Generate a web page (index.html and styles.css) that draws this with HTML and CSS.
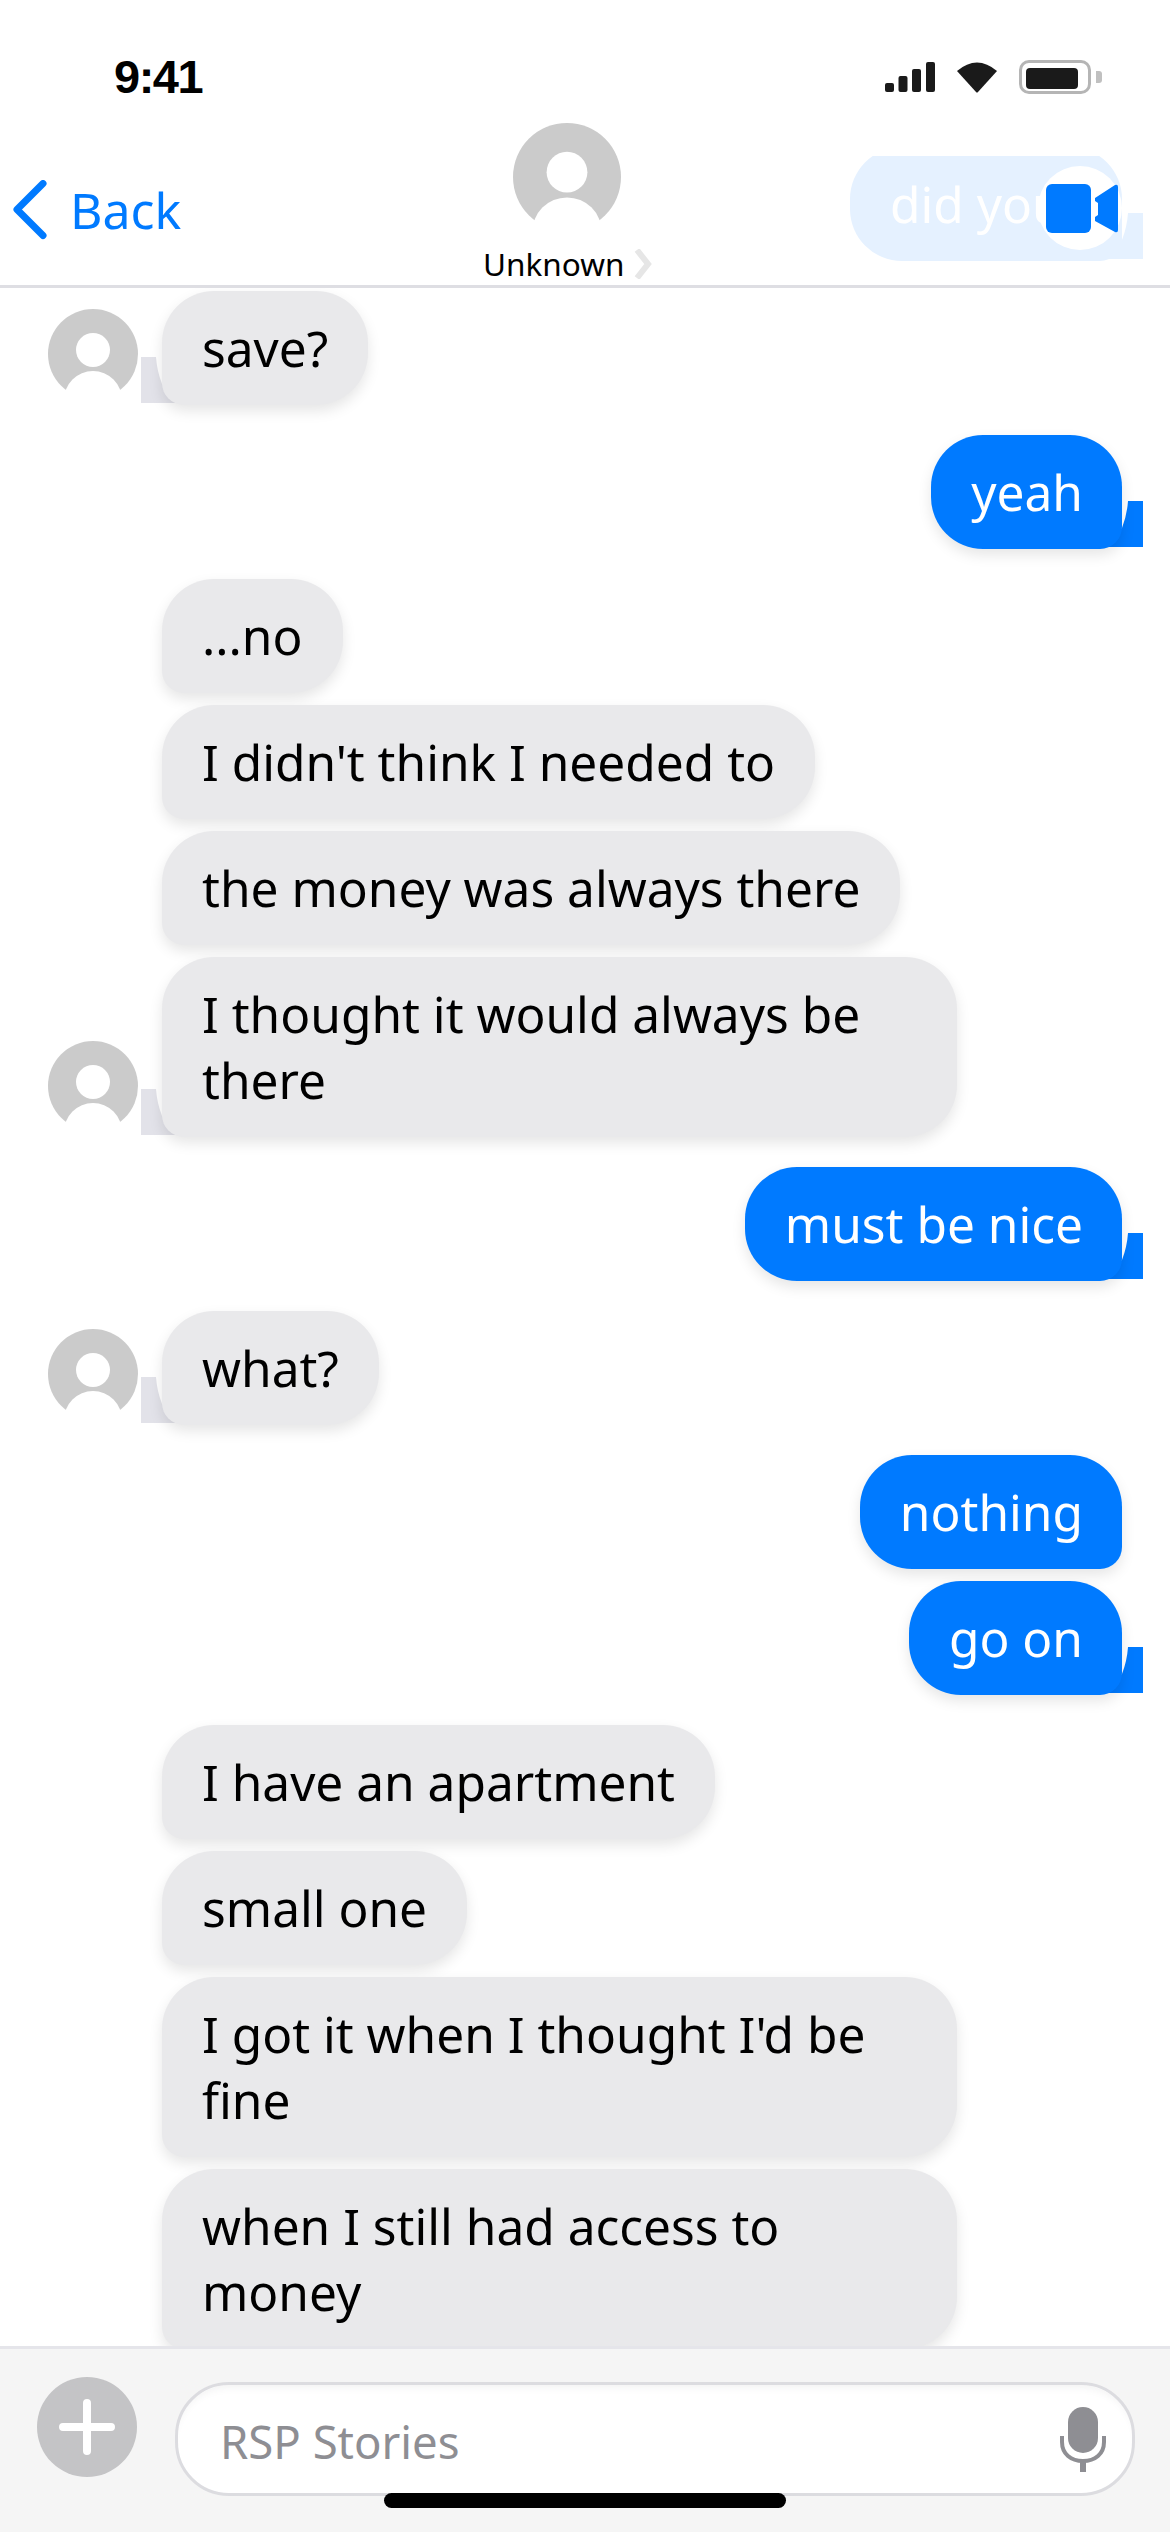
FILE: index.html
```html
<!DOCTYPE html>
<html lang="en">
<head>
    <meta charset="UTF-8">
    <meta name="viewport" content="width=device-width, initial-scale=1.0">
    <title>RSP Stories</title>
    <link rel="stylesheet" href="styles.css">
</head>
<body>
    <div class="phone">
        <!-- Status bar -->
        <div class="status-bar">
            <span class="time">9:41</span>
            <div class="status-icons">
                <svg class="signal" width="50" height="30" viewBox="0 0 50 30">
                    <rect x="0" y="21" width="9" height="9" rx="2"/>
                    <rect x="13.5" y="14" width="9" height="16" rx="2"/>
                    <rect x="27" y="7" width="9" height="23" rx="2"/>
                    <rect x="41" y="0" width="9" height="30" rx="2"/>
                </svg>
                <svg class="wifi" width="40" height="32" viewBox="0 0 40 32">
                    <path d="M0 10 Q20 -7 40 10 L21 31 Q20 32 19 31 Z"/>
                </svg>
                <div class="battery">
                    <div class="battery-body"><div class="battery-level"></div></div>
                    <div class="battery-cap"></div>
                </div>
            </div>
        </div>

        <!-- Header -->
        <div class="nav">
            <div class="ghost-bubble">
                <span>did you</span>
                <svg class="tail ghost-tail" width="43" height="46" viewBox="0 0 43 46"><path d="M43 0V46H0L22 27Q27 14 28 0Z"/></svg>
            </div>
            <div class="back">
                <svg width="36" height="60" viewBox="0 0 36 60">
                    <path d="M31 3.5 L5 29.5 L31 55.5" fill="none" stroke="#007aff" stroke-width="7" stroke-linecap="round" stroke-linejoin="round"/>
                </svg>
                <span>Back</span>
            </div>
            <div class="contact">
                <svg class="avatar-lg" viewBox="0 0 90 90"><use href="#person"/></svg>
                <div class="contact-name">
                    <span>Unknown</span>
                    <svg width="18" height="30" viewBox="0 0 18 30">
                        <path d="M3 1 L14 15 L3 29" fill="none" stroke="#e6e6e6" stroke-width="6"/>
                    </svg>
                </div>
            </div>
            <div class="video-btn">
                <svg width="72" height="50" viewBox="0 0 72 50">
                    <rect x="0" y="0" width="45" height="49" rx="6" fill="#007aff"/>
                    <path d="M49 14 L69 1 Q72 0 72 3 L72 46 Q72 49 69 48 L49 37 L49 33 L52 31 L52 19 L49 17 Z" fill="#007aff"/>
                </svg>
            </div>
        </div>

        <!-- Messages -->
        <div class="messages">
            <div class="row in group-end">
                <svg class="avatar" viewBox="0 0 90 90"><use href="#person"/></svg>
                <div class="bubble">save?<svg class="tail" width="43" height="46" viewBox="0 0 43 46"><path d="M43 0V46H0L22 27Q27 14 28 0Z"/></svg></div>
            </div>
            <div class="row out group-end">
                <div class="bubble">yeah<svg class="tail" width="43" height="46" viewBox="0 0 43 46"><path d="M43 0V46H0L22 27Q27 14 28 0Z"/></svg></div>
            </div>
            <div class="row in"><div class="bubble">...no</div></div>
            <div class="row in"><div class="bubble">I didn't think I needed to</div></div>
            <div class="row in"><div class="bubble">the money was always there</div></div>
            <div class="row in group-end">
                <svg class="avatar" viewBox="0 0 90 90"><use href="#person"/></svg>
                <div class="bubble">I thought it would always be there<svg class="tail" width="43" height="46" viewBox="0 0 43 46"><path d="M43 0V46H0L22 27Q27 14 28 0Z"/></svg></div>
            </div>
            <div class="row out group-end">
                <div class="bubble">must be nice<svg class="tail" width="43" height="46" viewBox="0 0 43 46"><path d="M43 0V46H0L22 27Q27 14 28 0Z"/></svg></div>
            </div>
            <div class="row in group-end">
                <svg class="avatar" viewBox="0 0 90 90"><use href="#person"/></svg>
                <div class="bubble">what?<svg class="tail" width="43" height="46" viewBox="0 0 43 46"><path d="M43 0V46H0L22 27Q27 14 28 0Z"/></svg></div>
            </div>
            <div class="row out"><div class="bubble">nothing</div></div>
            <div class="row out group-end">
                <div class="bubble">go on<svg class="tail" width="43" height="46" viewBox="0 0 43 46"><path d="M43 0V46H0L22 27Q27 14 28 0Z"/></svg></div>
            </div>
            <div class="row in"><div class="bubble">I have an apartment</div></div>
            <div class="row in"><div class="bubble">small one</div></div>
            <div class="row in"><div class="bubble wide">I got it when I thought I'd be fine</div></div>
            <div class="row in"><div class="bubble wide">when I still had access to money</div></div>
        </div>

        <!-- Input bar -->
        <div class="composer">
            <div class="plus-btn">
                <svg width="56" height="56" viewBox="0 0 56 56">
                    <path d="M28 4V52M4 28H52" stroke="#fff" stroke-width="8" stroke-linecap="round"/>
                </svg>
            </div>
            <div class="input">
                <span>RSP Stories</span>
                <svg width="46" height="66" viewBox="0 0 46 66">
                    <rect x="8" y="0" width="30" height="46" rx="15" fill="#8e8e93"/>
                    <path d="M2 29V35C2 47 11 54 23 54C35 54 44 47 44 35V29" fill="none" stroke="#8e8e93" stroke-width="4"/>
                    <rect x="20" y="54" width="6" height="11" fill="#8e8e93"/>
                </svg>
            </div>
        </div>
        <div class="home-indicator"></div>
    </div>

    <svg class="defs" width="0" height="0">
        <symbol id="person" viewBox="0 0 90 90">
            <circle cx="45" cy="45" r="45" fill="#cbcbcb"/>
            <circle cx="45" cy="41" r="17" fill="#fff"/>
            <circle cx="45" cy="91" r="29" fill="#fff"/>
            <path d="M18 81 H72 V90 H18 Z" fill="#fff"/>
        </symbol>
    </svg>
</body>
</html>
```

FILE: styles.css
```css
html, body {
    margin: 0;
    padding: 0;
    background: #fff;
}
body {
    font-family: "Noto Sans", sans-serif;
    color: #000;
}
.phone {
    position: relative;
    width: 1170px;
    height: 2532px;
    display: flex;
    flex-direction: column;
    overflow: hidden;
}
.defs {
    position: absolute;
}

/* status bar */
.status-bar {
    height: 156px;
    box-sizing: border-box;
    padding: 52px 68px 0 114px;
    display: flex;
    justify-content: space-between;
    align-items: flex-start;
    flex-shrink: 0;
}
.time {
    font-family: "Liberation Sans", sans-serif;
    font-weight: 700;
    font-size: 47px;
    line-height: 50px;
    letter-spacing: -1.5px;
}
.status-icons {
    display: flex;
    align-items: center;
    gap: 22px;
    padding-top: 8px;
}
.signal, .wifi {
    fill: #1a1a1a;
}
.battery {
    display: flex;
    align-items: center;
    gap: 5px;
}
.battery-body {
    width: 72px;
    height: 34px;
    box-sizing: border-box;
    border: 3px solid #b5b5b5;
    border-radius: 10px;
    padding: 5px 10px 2px 4px;
}
.battery-level {
    height: 100%;
    background: #1a1a1a;
    border-radius: 4px;
}
.battery-cap {
    width: 6px;
    height: 12px;
    background: #c0c0c0;
    border-radius: 0 3px 3px 0;
}

/* header */
.nav {
    position: relative;
    height: 129px;
    flex-shrink: 0;
    border-bottom: 3px solid #dedee3;
}
.back {
    position: absolute;
    left: 12px;
    top: 20px;
    display: flex;
    align-items: center;
    gap: 22px;
    color: #007aff;
    font-size: 50px;
}
.contact {
    position: absolute;
    left: 483px;
    top: -33px;
    width: 170px;
}
.avatar-lg {
    display: block;
    width: 108px;
    height: 108px;
    margin-left: 30px;
}
.contact-name {
    display: flex;
    align-items: center;
    gap: 10px;
    margin-top: 11px;
    font-size: 31.5px;
    line-height: 44px;
}
.ghost-bubble {
    position: absolute;
    left: 850px;
    top: -9px;
    width: 272px;
    height: 114px;
    box-sizing: border-box;
    padding: 24px 40px;
    font-size: 49.6px;
    line-height: 66px;
    color: #fff;
    background: #e5f1ff;
    border-radius: 52px 52px 22px 52px;
    z-index: 0;
    clip-path: inset(9px -30px -20px -10px);
}
.ghost-tail {
    fill: #e5f1ff;
}
.video-btn {
    position: absolute;
    left: 1038px;
    top: 10px;
    width: 84px;
    height: 84px;
    border-radius: 50%;
    background: #fff;
}
.video-btn svg {
    position: absolute;
    left: 8px;
    top: 18px;
}

/* messages */
.messages {
    flex: 1;
    min-height: 0;
    overflow: hidden;
    position: relative;
    z-index: 0;
    padding-top: 3px;
}
.row {
    display: flex;
    align-items: flex-end;
    margin-bottom: 12px;
}
.row.group-end {
    margin-bottom: 30px;
}
.row.in {
    padding-left: 162px;
}
.row.in .avatar {
    width: 90px;
    height: 90px;
    margin-left: -114px;
    margin-right: 24px;
    margin-bottom: 6px;
    flex-shrink: 0;
}
.row.out {
    justify-content: flex-end;
    padding-right: 48px;
}
.bubble {
    position: relative;
    box-sizing: border-box;
    max-width: 795px;
    padding: 24px 40px;
    font-size: 49.6px;
    line-height: 66px;
    border-radius: 52px;
    box-shadow: 0 6px 14px rgba(0, 0, 0, 0.1);
}
.bubble.wide {
    width: 795px;
}
.row.in .bubble {
    background: #e9e9eb;
    color: #000;
    border-bottom-left-radius: 22px;
}
.row.out .bubble {
    background: #007aff;
    color: #fff;
    padding-right: 39px;
    border-bottom-right-radius: 22px;
}
.tail {
    position: absolute;
    bottom: 2px;
    z-index: -1;
}
.row.out .tail {
    right: -21px;
    fill: #007aff;
}
.row.in .tail {
    left: -21px;
    transform: scaleX(-1);
    fill: #e2e2e9;
}
.ghost-bubble .tail {
    right: -21px;
}

/* input bar */
.composer {
    height: 186px;
    flex-shrink: 0;
    box-sizing: border-box;
    border-top: 3px solid #e5e5ea;
    background: #f5f5f5;
    display: flex;
    align-items: flex-start;
    padding: 28px 37px 0 37px;
    gap: 38px;
}
.plus-btn {
    width: 100px;
    height: 100px;
    border-radius: 50%;
    background: #c4c4c6;
    display: flex;
    align-items: center;
    justify-content: center;
    flex-shrink: 0;
}
.input {
    width: 960px;
    height: 114px;
    margin-top: 5px;
    margin-right: -5px;
    flex-shrink: 0;
    box-sizing: border-box;
    border: 3px solid #dcdce0;
    border-radius: 54px;
    background: #fff;
    box-shadow: inset 0 8px 10px -6px rgba(0, 0, 0, 0.06);
    display: flex;
    align-items: center;
    justify-content: space-between;
    padding: 0 26px 0 42px;
    font-size: 45.5px;
    color: #8e8e93;
}
.input span {
    padding-top: 4px;
}
.input svg {
    margin-top: 2px;
}
.home-indicator {
    position: absolute;
    left: 384px;
    top: 2493px;
    width: 402px;
    height: 15px;
    border-radius: 8px;
    background: #000;
}
```
